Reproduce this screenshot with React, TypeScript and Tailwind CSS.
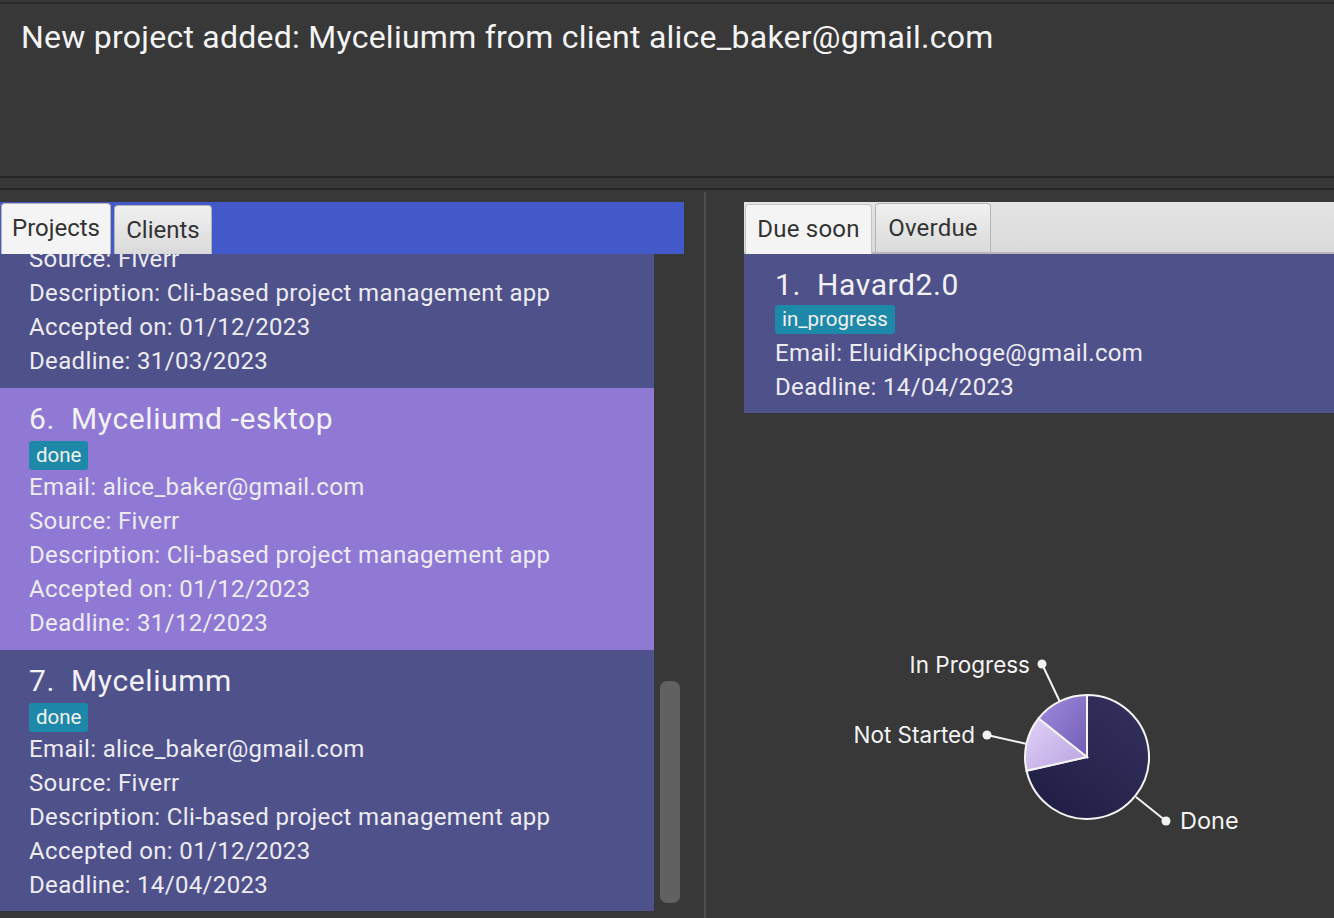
import React from 'react';

type Project = {
  idx: number;
  name: string;
  status: string;
  email: string;
  source: string;
  description: string;
  accepted: string;
  deadline: string;
  selected?: boolean;
};

const projects: Project[] = [
  {
    idx: 5,
    name: 'Mycelium',
    status: 'done',
    email: 'alice_baker@gmail.com',
    source: 'Fiverr',
    description: 'Cli-based project management app',
    accepted: '01/12/2023',
    deadline: '31/03/2023',
  },
  {
    idx: 6,
    name: 'Myceliumd -esktop',
    status: 'done',
    email: 'alice_baker@gmail.com',
    source: 'Fiverr',
    description: 'Cli-based project management app',
    accepted: '01/12/2023',
    deadline: '31/12/2023',
    selected: true,
  },
  {
    idx: 7,
    name: 'Myceliumm',
    status: 'done',
    email: 'alice_baker@gmail.com',
    source: 'Fiverr',
    description: 'Cli-based project management app',
    accepted: '01/12/2023',
    deadline: '14/04/2023',
  },
];

const Badge = ({ text }: { text: string }) => (
  <div className="flex">
    <span className="h-[29px] px-[7px] flex items-center rounded-[3px] bg-[#1e88a9] text-[20.5px] text-[#f2f2f2]">
      {text}
    </span>
  </div>
);

const ProjectCard = ({ p }: { p: Project }) => (
  <div
    className={`h-[262px] pl-[29px] pt-[12px] ${p.selected ? 'bg-[#9079d4]' : 'bg-[#4f518b]'}`}
  >
    <div className="h-[38px] text-[30px] leading-[38px] tracking-[0.6px] text-[#f2f2f6] whitespace-pre">
      {p.idx}.  {p.name}
    </div>
    <div className="pt-[3px] h-[32px]">
      <Badge text={p.status} />
    </div>
    <div className="text-[24px] leading-[34px] tracking-[0.35px] text-[#ececf2]">
      <div>Email: {p.email}</div>
      <div>Source: {p.source}</div>
      <div>Description: {p.description}</div>
      <div>Accepted on: {p.accepted}</div>
      <div>Deadline: {p.deadline}</div>
    </div>
  </div>
);

const Tab = ({ label, active, w }: { label: string; active?: boolean; w: string }) => (
  <div
    className={`${w} flex items-center justify-center rounded-t-[4px] border border-b-0 border-[#b4b4b4] text-[24px] text-[#333333] ${
      active ? 'h-[51px] pb-[2px] bg-[#f4f4f4]' : 'h-[49px] bg-gradient-to-b from-[#f0f0f0] to-[#dadada]'
    }`}
  >
    {label}
  </div>
);

const PieChart = () => {
  const cx = 343;
  const cy = 344;
  return (
    <svg width="590" height="505" viewBox="0 0 590 505">
      <defs>
        <linearGradient id="gDone" x1="1" y1="0" x2="0.3" y2="1">
          <stop offset="0" stopColor="#34315f" />
          <stop offset="1" stopColor="#221f46" />
        </linearGradient>
        <linearGradient id="gNot" x1="0" y1="0" x2="1" y2="1">
          <stop offset="0" stopColor="#e2d2fa" />
          <stop offset="1" stopColor="#b7a2dd" />
        </linearGradient>
        <linearGradient id="gProg" x1="0" y1="0" x2="1" y2="1">
          <stop offset="0" stopColor="#9f8bdc" />
          <stop offset="1" stopColor="#725db6" />
        </linearGradient>
      </defs>
      <path
        d={`M${cx},${cy} L343,282 A62,62 0 1,1 282.56,357.8 Z`}
        fill="url(#gDone)"
        stroke="#f4f4f4"
        strokeWidth="2"
      />
      <path
        d={`M${cx},${cy} L282.56,357.8 A62,62 0 0,1 294.53,305.34 Z`}
        fill="url(#gNot)"
        stroke="#f4f4f4"
        strokeWidth="2"
      />
      <path
        d={`M${cx},${cy} L294.53,305.34 A62,62 0 0,1 343,282 Z`}
        fill="url(#gProg)"
        stroke="#f4f4f4"
        strokeWidth="2"
      />
      <g stroke="#f2f2f2" strokeWidth="2">
        <line x1="298" y1="251" x2="316" y2="289" />
        <line x1="243" y1="322" x2="283" y2="331" />
        <line x1="392" y1="384" x2="422" y2="408" />
      </g>
      <g fill="#f2f2f2">
        <circle cx="298" cy="251" r="4.5" />
        <circle cx="243" cy="322" r="4.5" />
        <circle cx="422" cy="408" r="4.5" />
      </g>
      <g fill="#f4f4f4" fontFamily="Inter, 'Noto Sans', sans-serif" fontSize="22.5">
        <text x="286" y="260" textAnchor="end">In Progress</text>
        <text x="231" y="330" textAnchor="end">Not Started</text>
        <text x="436" y="416" fontSize="23.5">Done</text>
      </g>
    </svg>
  );
};

export default function App() {
  return (
    <div
      className="w-[1334px] h-[918px] overflow-hidden bg-[#383838] flex flex-col"
      style={{ fontFamily: 'Roboto, "Liberation Sans", sans-serif' }}
    >
      {/* result display */}
      <div className="h-[176px] shrink-0 pt-[2px]">
        <div className="border-t-2 border-[#2b2b2b] pl-[21px] pt-[15px] text-[32px] leading-[36px] tracking-[0.25px] text-[#f4f4f4]">
          New project added: Myceliumm from client alice_baker@gmail.com
        </div>
      </div>
      <div className="h-[2px] bg-[#262626]" />
      <div className="h-[10px]" />
      <div className="h-[2px] bg-[#262626]" />

      <div className="flex-1 flex min-h-0">
        {/* left: projects / clients */}
        <div className="w-[684px] flex flex-col pt-[12px]">
          <div className="h-[52px] shrink-0 bg-[#4358c9] flex items-end gap-[3px] pl-[1px]">
            <Tab label="Projects" active w="w-[110px]" />
            <Tab label="Clients" w="w-[98px]" />
          </div>
          <div className="flex h-[657px]">
            <div className="w-[654px] overflow-hidden">
              <div className="mt-[-128px]">
                {projects.map((p) => (
                  <ProjectCard key={p.idx} p={p} />
                ))}
              </div>
            </div>
            <div className="w-[30px] pl-[6px] pt-[427px]">
              <div className="w-[20px] h-[222px] rounded-[7px] bg-[#616161]" />
            </div>
          </div>
        </div>

        {/* divider */}
        <div className="w-[20px]" />
        <div className="w-[2px] mt-[2px] bg-[#4e4e4e]" />
        <div className="w-[38px]" />

        {/* right: deadlines + chart */}
        <div className="flex-1 flex flex-col pt-[12px]">
          <div className="h-[52px] shrink-0 bg-gradient-to-b from-[#e4e4e4] to-[#dadada] border-b-2 border-[#b6b6b6] flex items-end gap-[3px] pl-[1px]">
            <div className="w-[127px] h-[50px] mb-[-2px] pb-[2px] flex items-center justify-center rounded-t-[4px] border border-b-0 border-[#c4c4c4] bg-[#f4f4f4] text-[24px] tracking-[0.2px] text-[#333333]">
              Due soon
            </div>
            <div className="w-[116px] h-[49px] flex items-center justify-center rounded-t-[4px] border border-b-0 border-[#b4b4b4] bg-gradient-to-b from-[#f0f0f0] to-[#dadada] text-[24px] tracking-[0.2px] text-[#333333]">
              Overdue
            </div>
          </div>
          <div className="h-[159px] bg-[#4f518b] pl-[31px] pt-[12px]">
            <div className="h-[38px] text-[30px] leading-[38px] tracking-[0.6px] text-[#f2f2f6] whitespace-pre">
              1.  Havard2.0
            </div>
            <div className="h-[32px] pt-[1px]">
              <Badge text="in_progress" />
            </div>
            <div className="text-[24px] leading-[34px] tracking-[0.35px] text-[#ececf2]">
              <div>Email: EluidKipchoge@gmail.com</div>
              <div>Deadline: 14/04/2023</div>
            </div>
          </div>
          <PieChart />
        </div>
      </div>
    </div>
  );
}
